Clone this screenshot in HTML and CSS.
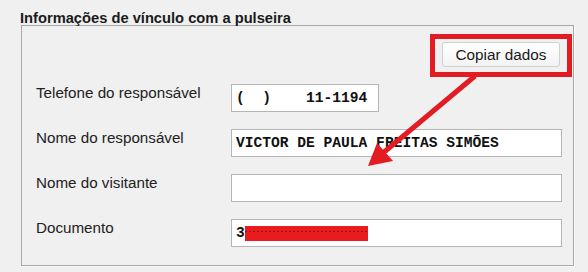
FILE: index.html
```html
<!DOCTYPE html>
<html lang="pt">
<head>
<meta charset="utf-8">
<title>Informações de vínculo com a pulseira</title>
<link rel="stylesheet" href="styles.css">
</head>
<body>
<div class="panel">
  <div class="title">Informações de vínculo com a pulseira</div>
  <div class="group">
    <div class="actions">
      <span class="highlight"><button class="btn" type="button">Copiar dados</button></span>
    </div>
    <div class="rows">
      <div class="row">
        <span class="label">Telefone do responsável</span>
        <div class="field field-short">(&nbsp;&nbsp;)&nbsp;&nbsp;&nbsp;&nbsp;11-1194</div>
      </div>
      <div class="row">
        <span class="label">Nome do responsável</span>
        <div class="field">VICTOR DE PAULA FREITAS SIMÕES</div>
      </div>
      <div class="row">
        <span class="label">Nome do visitante</span>
        <div class="field"></div>
      </div>
      <div class="row">
        <span class="label">Documento</span>
        <div class="field">3<span class="redact"></span></div>
      </div>
    </div>
  </div>
</div>
<svg class="annotation" width="588" height="272" viewBox="0 0 588 272" aria-hidden="true">
  <line x1="475" y1="76" x2="383" y2="153" stroke="#e31b23" stroke-width="5"/>
  <polygon points="368,166 377,143 393,161" fill="#e31b23"/>
</svg>
</body>
</html>
```

FILE: styles.css
```css
html, body {
  margin: 0;
  padding: 0;
  background: #f0f0f0;
}

body {
  width: 588px;
  height: 272px;
  position: relative;
  overflow: hidden;
  font-family: "Liberation Sans", Arial, sans-serif;
  color: #1e1e1e;
}

.panel {
  padding: 11px 14px 0 21px;
}

.title {
  font-weight: bold;
  font-size: 14.7px;
  line-height: 14px;
  height: 14px;
  color: #1a1a1a;
  margin-left: -1px;
  position: relative;
  z-index: 1;
}

.group {
  border: 1px solid #a8a8a8;
  box-shadow: 1px 1px 0 #fbfbfb;
  padding: 8px 11px 0 14px;
  box-sizing: border-box;
  height: 241px;
}

.actions {
  display: flex;
  justify-content: flex-end;
  margin-right: -10px;
}

.highlight {
  display: flex;
  border: 5px solid #e31b23;
  padding: 3px 7px 5px 7px;
  width: 142px;
  box-sizing: border-box;
  justify-content: center;
}

.btn {
  width: 118px;
  height: 25px;
  margin: 0;
  padding: 0;
  border: 1px solid #cfcfcf;
  border-radius: 3px;
  background: linear-gradient(#ffffff, #f3f3f3);
  font-family: "Liberation Sans", Arial, sans-serif;
  font-size: 15.3px;
  color: #1a1a1a;
  line-height: 23px;
}

.rows {
  display: flex;
  flex-direction: column;
  gap: 17px;
  margin-top: 7px;
}

.row {
  display: grid;
  grid-template-columns: 195px 1fr;
  align-items: start;
  height: 28px;
}

.label {
  font-size: 15.2px;
  line-height: 18px;
  margin-top: 0;
  color: #222;
}

.field {
  height: 28px;
  box-sizing: border-box;
  border: 1px solid #b5b5b5;
  background: #fff;
  padding: 0 4px;
  font-family: "Liberation Mono", "Courier New", monospace;
  font-weight: bold;
  font-size: 14.6px;
  line-height: 26px;
  color: #111;
  white-space: pre;
  display: flex;
  align-items: center;
}

.field-short {
  width: 148px;
}

.redact {
  display: inline-block;
  width: 123px;
  height: 15px;
  background-color: #e81c1f;
  background-image: linear-gradient(90deg, #9a1010 50%, transparent 50%);
  background-size: 4px 1px;
  background-repeat: repeat-x;
  background-position: 8px 5px;
}

.annotation {
  position: absolute;
  top: 0;
  left: 0;
  pointer-events: none;
}
```
